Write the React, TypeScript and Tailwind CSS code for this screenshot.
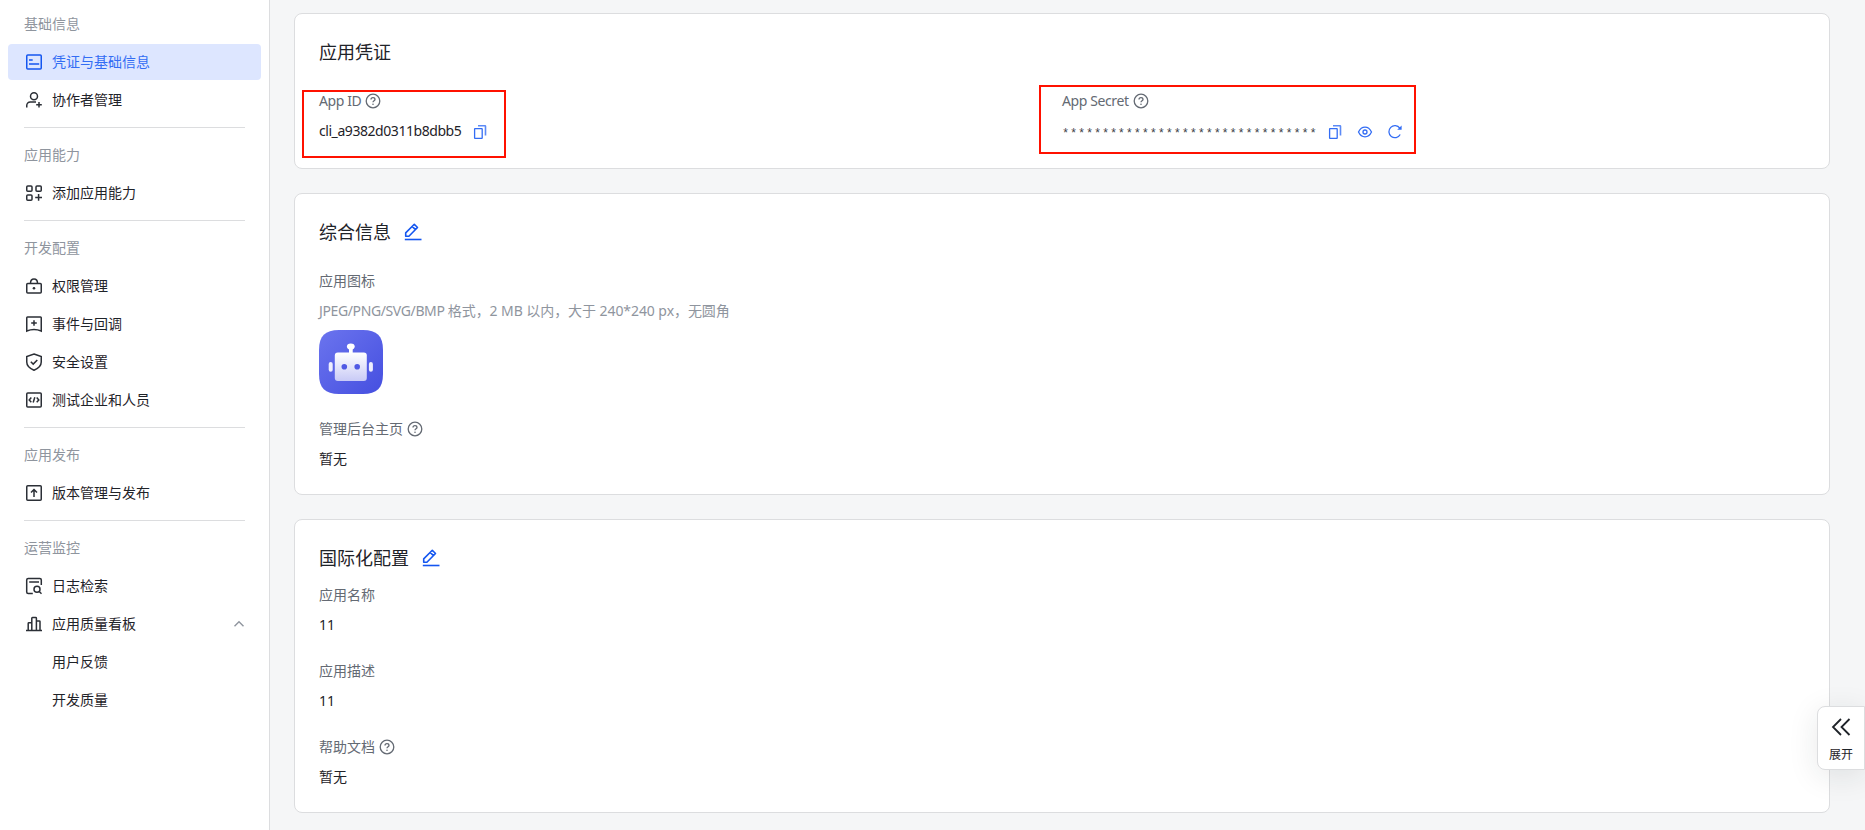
import type { ReactNode } from "react";

type IconName =
  | "credential"
  | "member"
  | "ability"
  | "lock"
  | "event"
  | "shield"
  | "code"
  | "upload"
  | "log"
  | "chart";

interface NavItem {
  label: string;
  icon?: IconName;
  active?: boolean;
  expanded?: boolean;
}

const groups: { title: string; items: NavItem[] }[] = [
  {
    title: "基础信息",
    items: [
      { label: "凭证与基础信息", icon: "credential", active: true },
      { label: "协作者管理", icon: "member" },
    ],
  },
  { title: "应用能力", items: [{ label: "添加应用能力", icon: "ability" }] },
  {
    title: "开发配置",
    items: [
      { label: "权限管理", icon: "lock" },
      { label: "事件与回调", icon: "event" },
      { label: "安全设置", icon: "shield" },
      { label: "测试企业和人员", icon: "code" },
    ],
  },
  { title: "应用发布", items: [{ label: "版本管理与发布", icon: "upload" }] },
  {
    title: "运营监控",
    items: [
      { label: "日志检索", icon: "log" },
      { label: "应用质量看板", icon: "chart", expanded: true },
      { label: "用户反馈" },
      { label: "开发质量" },
    ],
  },
];

const navIcons: Record<IconName, ReactNode> = {
  credential: (
    <>
      <rect x="1.75" y="2" width="14.5" height="14" rx="1" />
      <path d="M4 7h3.7M4 11h10.2" />
    </>
  ),
  member: (
    <>
      <circle cx="9" cy="5.2" r="3.5" />
      <path d="M1.75 16.5v-2a3.5 3.5 0 0 1 3.5-3.5H11M14 10.9v5.6M11.2 13.7h5.6" />
    </>
  ),
  ability: (
    <>
      <rect x="1.75" y="2" width="5.25" height="5.25" rx="1" />
      <rect x="11" y="2" width="5.25" height="5.25" rx="1" />
      <rect x="1.75" y="11" width="5.25" height="5.25" rx="1" />
      <path d="M13.6 10v6.8M10.2 13.4H17" />
    </>
  ),
  lock: (
    <>
      <rect x="1.75" y="6.5" width="14.5" height="9.5" rx="1" />
      <path d="M5.5 6.3C5.5 3.5 7 2 9 2s3.5 1.5 3.5 4.3" />
      <circle cx="9" cy="11.3" r="1.3" fill="currentColor" stroke="none" />
    </>
  ),
  event: (
    <>
      <path d="M2.5 2h13a.75.75 0 0 1 .75.75V16C11.5 14 6.5 14 1.75 16V2.75A.75.75 0 0 1 2.5 2z" />
      <path d="M9 5.2v5.6M6.2 8h5.6" />
    </>
  ),
  shield: (
    <>
      <path d="M9 1l7.25 2.5V9c0 3.8-3.2 6.5-7.25 8.2C4.95 15.5 1.75 12.8 1.75 9V3.5z" />
      <path d="M5.8 8.8L8.2 11.1 12.3 6.9" />
    </>
  ),
  code: (
    <>
      <rect x="1.75" y="2" width="14.5" height="14" rx="1" />
      <path d="M6.3 6.6L4.2 8.9l2.1 2.3M11.7 6.6l2.1 2.3-2.1 2.3M9.8 6.3L8.2 11.5" />
    </>
  ),
  upload: (
    <>
      <rect x="1.75" y="1.75" width="14.5" height="14.5" rx="1" />
      <path d="M9 13V5.7M6 8.5l3-3 3 3" />
    </>
  ),
  log: (
    <>
      <path d="M7.8 16.5H3.2a1.5 1.5 0 0 1-1.5-1.5V3A1.5 1.5 0 0 1 3.2 1.5h11.6A1.5 1.5 0 0 1 16.3 3v5M4.2 5h9.8" />
      <circle cx="12" cy="12.3" r="3" />
      <path d="M14.2 14.5l2.3 2.2" />
    </>
  ),
  chart: (
    <path d="M1 15.5h16M3.2 15.5V8.5a.7.7 0 0 1 .7-.7h2.9M6.8 15.5V3.2a.7.7 0 0 1 .7-.7h3.2a.7.7 0 0 1 .7.7v12.3M11.4 5.9h2.9a.7.7 0 0 1 .7.7v8.9" />
  ),
};

function NavIcon({ name }: { name: IconName }) {
  return (
    <svg
      width="18"
      height="18"
      viewBox="0 0 18 18"
      fill="none"
      stroke="currentColor"
      strokeWidth="1.5"
      className="shrink-0"
    >
      {navIcons[name]}
    </svg>
  );
}

function HelpIcon() {
  return (
    <svg width="16" height="16" viewBox="0 0 16 16" fill="none" stroke="currentColor" strokeWidth="1.3">
      <circle cx="8" cy="8" r="6.8" />
      <path d="M6 6.6C6 5.3 6.9 4.6 8 4.6s2 .7 2 1.8c0 1.3-2 1.4-2 2.9" />
      <circle cx="8" cy="11.2" r=".8" fill="currentColor" stroke="none" />
    </svg>
  );
}

function EditIcon() {
  return (
    <svg
      width="18"
      height="18"
      viewBox="0 0 18 18"
      fill="none"
      stroke="currentColor"
      strokeWidth="1.6"
      strokeLinejoin="round"
      className="ml-[13px] text-[#1456f0]"
    >
      <path d="M1.7 13.2V9.9L10.3 1.3l3.2 3.2L4.9 13.2zM8.2 3.4l3.2 3.2" />
      <path d="M.8 16.5h16.7" />
    </svg>
  );
}

function CopyIcon() {
  return (
    <svg width="16" height="16" viewBox="0 0 16 16" fill="none" stroke="currentColor" strokeWidth="1.3">
      <rect x="2.6" y="4.6" width="7.6" height="9.8" rx=".4" />
      <path d="M6 1.8h7a.5.5 0 0 1 .5.5v9.2" strokeWidth="1.6" opacity=".8" />
    </svg>
  );
}

function EyeIcon() {
  return (
    <svg width="16" height="16" viewBox="0 0 16 16" fill="none" stroke="currentColor" strokeWidth="1.3">
      <path d="M1.5 8C3 4.900 5.300 3.200 8 3.200S13 4.900 14.500 8C13 11.100 10.700 12.800 8 12.800S3 11.100 1.500 8z" />
      <circle cx="8" cy="8" r="2" />
    </svg>
  );
}

function RefreshIcon() {
  return (
    <svg width="16" height="16" viewBox="0 0 16 16" fill="none" stroke="currentColor" strokeWidth="1.3">
      <path d="M13.2 10.5A6 6 0 1 1 12.8 4.2" />
      <path d="M14.6 1.4v4.400H10.200z" fill="currentColor" stroke="none" />
    </svg>
  );
}

function RobotLogo() {
  return (
    <svg width="64" height="64" viewBox="0 0 64 64" className="mt-2 block">
      <defs>
        <linearGradient id="logo-bg" x1="0" y1="0" x2="1" y2="1">
          <stop offset="0" stopColor="#6b74ee" />
          <stop offset="1" stopColor="#454fe0" />
        </linearGradient>
        <linearGradient id="logo-face" x1="0" y1="0" x2="0" y2="1">
          <stop offset="0" stopColor="#ffffff" />
          <stop offset="1" stopColor="#c8caf6" />
        </linearGradient>
      </defs>
      <path
        d="M20 0h24c14 0 20 6 20 20v24c0 14-6 20-20 20H20C6 64 0 58 0 44V20C0 6 6 0 20 0z"
        fill="url(#logo-bg)"
      />
      <ellipse cx="31.8" cy="16.6" rx="3.9" ry="3.1" fill="#fff" />
      <rect x="30" y="17" width="3.7" height="7" fill="#fff" />
      <rect x="15.8" y="22.5" width="32" height="28.5" rx="3" fill="url(#logo-face)" />
      <rect x="9.7" y="32" width="4" height="9.7" rx="2" fill="#eeeefd" />
      <rect x="49.9" y="32" width="4" height="9.7" rx="2" fill="#eeeefd" />
      <circle cx="25.3" cy="36.7" r="2.8" fill="#5059e4" />
      <circle cx="38.2" cy="36.7" r="2.8" fill="#5059e4" />
    </svg>
  );
}

function Sidebar() {
  return (
    <aside className="flex w-[270px] shrink-0 flex-col gap-0.5 border-r border-[#dcdddf] bg-white px-2 pt-1.5">
      {groups.map((group, index) => (
        <div key={group.title} className="flex flex-col gap-0.5">
          {index > 0 && <div className="mx-4 my-[7px] h-px bg-[#dcdddf]" />}
          <div className="flex h-9 items-center px-4 text-[#8f959e]">{group.title}</div>
          {group.items.map((item) => (
            <a
              key={item.label}
              className={
                item.active
                  ? "flex h-9 items-center gap-[9px] rounded bg-[#dde6ff] px-[17px] text-[#336df4]"
                  : "flex h-9 items-center gap-[9px] rounded px-[17px] text-[#1f2329]"
              }
            >
              {item.icon ? (
                <span className={item.active ? "text-[#1456f0]" : "text-[#2b2f36]"}>
                  <NavIcon name={item.icon} />
                </span>
              ) : (
                <span className="w-[18px]" />
              )}
              <span>{item.label}</span>
              {item.expanded && (
                <svg
                  width="12"
                  height="12"
                  viewBox="0 0 12 12"
                  fill="none"
                  stroke="#8f959e"
                  strokeWidth="1.4"
                  className="-mr-px ml-auto"
                >
                  <path d="M1.5 8.2L6 3.7l4.5 4.5" />
                </svg>
              )}
            </a>
          ))}
        </div>
      ))}
    </aside>
  );
}

interface CardProps {
  title: string;
  editable?: boolean;
  className: string;
  children: ReactNode;
}

function Card({ title, editable, className, children }: CardProps) {
  return (
    <section className={`rounded-lg border border-[#dcdddf] bg-white px-6 pt-[25px] ${className}`}>
      <h2 className="flex h-[26px] items-center text-lg text-[#1f2329]">
        {title}
        {editable && <EditIcon />}
      </h2>
      {children}
    </section>
  );
}

interface FieldProps {
  label: string;
  help?: boolean;
  latin?: boolean;
  children: ReactNode;
}

function Field({ label, help, latin, children }: FieldProps) {
  return (
    <div>
      <div className="flex h-[22px] items-center gap-1 text-[#646a73]">
        <span className={latin ? "tracking-[-0.4px]" : ""}>{label}</span>
        {help && <HelpIcon />}
      </div>
      <div className="mt-2">{children}</div>
    </div>
  );
}

export default function App() {
  return (
    <div className="relative flex h-[830px] overflow-hidden bg-[#f5f6f7] font-['Noto_Sans','Noto_Sans_CJK_SC',sans-serif] text-sm leading-[22px] text-[#1f2329]">
      <Sidebar />

      <main className="flex flex-1 flex-col gap-6 pt-[13px] pr-[35px] pl-6">
        <Card title="应用凭证" className="relative h-[156px]">
          <div className="mt-[25px] grid grid-cols-2">
            <Field label="App ID" help latin>
              <div className="flex h-[22px] items-center">
                <span className="w-[143px] tracking-[-0.44px] whitespace-nowrap">cli_a9382d0311b8dbb5</span>
                <span className="ml-[10px] pt-0.5 text-[#336df4]">
                  <CopyIcon />
                </span>
              </div>
            </Field>
            <Field label="App Secret" help latin>
              <div className="flex h-[22px] items-center">
                <span className="w-[265px] pt-1.5 font-['Liberation_Mono',monospace] text-xs tracking-[0.78px] whitespace-nowrap text-[#3d4148]">
                  ********************************
                </span>
                <span className="flex gap-[14px] pt-0.5 text-[#336df4]">
                  <CopyIcon />
                  <EyeIcon />
                  <RefreshIcon />
                </span>
              </div>
            </Field>
          </div>
          {/* highlight frames */}
          <div className="absolute top-[76px] left-[7px] h-[68px] w-[204px] border-2 border-[#ff1100]" />
          <div className="absolute top-[71px] left-[744px] h-[69px] w-[377px] border-2 border-[#ff1100]" />
        </Card>

        <Card title="综合信息" editable className="h-[302px]">
          <div className="mt-[25px]">
            <Field label="应用图标">
              <p className="text-[#8f959e]">
                <span className="tracking-[-0.38px]">JPEG/PNG/SVG/BMP </span>
                <span className="tracking-[-0.07px]">格式，2 MB 以内，大于 240*240 px，无圆角</span>
              </p>
              <RobotLogo />
            </Field>
          </div>
          <div className="mt-6">
            <Field label="管理后台主页" help>
              暂无
            </Field>
          </div>
        </Card>

        <Card title="国际化配置" editable className="h-[294px]">
          <div className="mt-[13px] flex flex-col gap-6">
            <Field label="应用名称">11</Field>
            <Field label="应用描述">11</Field>
            <Field label="帮助文档" help>
              暂无
            </Field>
          </div>
        </Card>
      </main>

      <button className="absolute top-[706px] right-0 flex h-16 w-12 flex-col items-center rounded-l-lg border border-[#dcdddf] bg-white pt-2.5 text-xs shadow-[0_6px_30px_rgba(31,35,41,0.1)]">
        <svg width="20" height="20" viewBox="0 0 20 20" fill="none" stroke="#1f2329" strokeWidth="1.8">
          <path d="M10 2L2 10l8 8M18.5 2l-8 8 8 8" />
        </svg>
        <span className="mt-[9px] leading-[18px]">展开</span>
      </button>
    </div>
  );
}
